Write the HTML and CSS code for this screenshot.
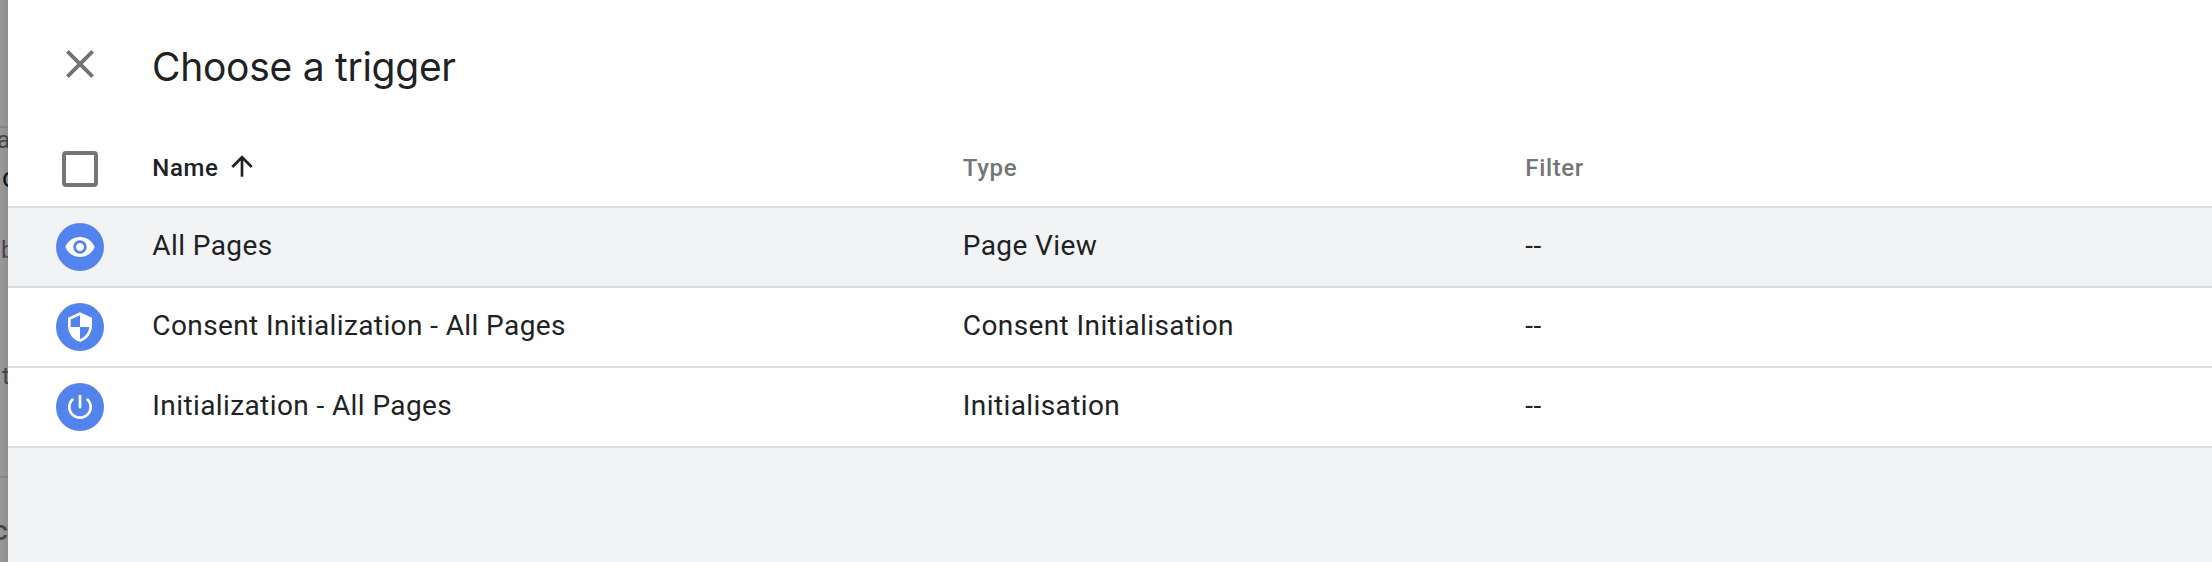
FILE: index.html
```html
<!DOCTYPE html>
<html lang="en">
<head>
<meta charset="utf-8">
<title>Choose a trigger</title>
<link rel="stylesheet" href="styles.css">
</head>
<body>
<div class="app">
  <div class="underlay" aria-hidden="true">
    <span class="rule rule-top"></span>
    <span class="peek peek-a">a</span>
    <span class="peek peek-co">c</span>
    <span class="peek peek-b">b</span>
    <span class="peek peek-t">t</span>
    <span class="rule rule-bottom"></span>
    <span class="peek peek-c">c</span>
  </div>
  <main class="sheet">
    <header class="sheet-header">
      <svg class="close" viewBox="0 0 24 24"><path d="M19 6.41L17.59 5 12 10.59 6.41 5 5 6.41 10.59 12 5 17.59 6.41 19 12 13.41 17.59 19 19 17.59 13.41 12z"/></svg>
      <h1 class="title">Choose a trigger</h1>
    </header>
    <div class="table">
      <div class="row head">
        <span class="cell-icon"><span class="checkbox"></span></span>
        <span class="sorted">Name <svg class="arrow" viewBox="0 0 24 24"><path d="M4 12l1.41 1.41L11 7.83V20h2V7.83l5.58 5.59L20 12l-8-8-8 8z"/></svg></span>
        <span>Type</span>
        <span>Filter</span>
      </div>
      <div class="row active">
        <span class="cell-icon"><span class="badge"><svg viewBox="0 0 24 24"><path d="M12 4.5C7 4.5 2.73 7.61 1 12c1.73 4.39 6 7.5 11 7.5s9.27-3.11 11-7.5c-1.73-4.39-6-7.5-11-7.5zM12 17c-2.76 0-5-2.24-5-5s2.24-5 5-5 5 2.24 5 5-2.24 5-5 5zm0-8c-1.66 0-3 1.34-3 3s1.34 3 3 3 3-1.34 3-3-1.34-3-3-3z"/></svg></span></span>
        <span>All Pages</span>
        <span>Page View</span>
        <span>--</span>
      </div>
      <div class="row">
        <span class="cell-icon"><span class="badge"><svg viewBox="0 0 24 24"><path d="M12 1L3 5v6c0 5.55 3.84 10.74 9 12 5.16-1.26 9-6.45 9-12V5l-9-4zm0 10.99h7c-.53 4.12-3.28 7.79-7 8.94V12H5V6.3l7-3.11v8.8z"/></svg></span></span>
        <span>Consent Initialization - All Pages</span>
        <span>Consent Initialisation</span>
        <span>--</span>
      </div>
      <div class="row">
        <span class="cell-icon"><span class="badge"><svg viewBox="0 0 24 24"><path d="M13 3h-2v10h2V3zm4.83 2.17l-1.42 1.42C17.99 7.86 19 9.81 19 12c0 3.87-3.13 7-7 7s-7-3.13-7-7c0-2.19 1.01-4.14 2.58-5.42L6.17 5.17C4.23 6.82 3 9.26 3 12c0 4.97 4.03 9 9 9s9-4.03 9-9c0-2.74-1.23-5.18-3.17-6.83z"/></svg></span></span>
        <span>Initialization - All Pages</span>
        <span>Initialisation</span>
        <span>--</span>
      </div>
    </div>
  </main>
</div>
</body>
</html>
```

FILE: styles.css
```css
* { box-sizing: border-box; }
body { margin: 0; font-family: Roboto, sans-serif; color: #202124; }
.app { display: flex; width: 2212px; height: 562px; overflow: hidden; }

.underlay { position: relative; flex: none; width: 8px; overflow: hidden; background: linear-gradient(to right, #999, #8e8e8e); }
.peek { position: absolute; line-height: 30px; font-size: 24px; color: #464646; }
.peek-a { left: -3px; top: 125px; }
.peek-co { left: 2px; top: 163px; font-size: 28px; color: #141414; }
.peek-b { left: 1px; top: 235px; }
.peek-t { left: 2px; top: 361px; }
.peek-c { left: -7px; top: 516px; font-size: 28px; font-weight: 500; }
.rule { position: absolute; left: 0; width: 8px; height: 2px; background: #848484; }
.rule-top { top: 126px; }
.rule-bottom { top: 476px; }

.sheet { flex: 1; background: #f1f3f4; }
.sheet-header { display: flex; height: 128px; padding-left: 48px; background: #fff; }
.close { width: 48px; height: 48px; margin-top: 40px; fill: #757575; }
.title { margin: 39px 0 0 48px; font: 400 39px/56px Inter, sans-serif; letter-spacing: -0.28px; }

.row { display: grid; grid-template-columns: 144.3px 810.5px 562.5px 1fr; align-items: center; height: 80px; padding-bottom: 2px; border-bottom: 2px solid #dadce0; background: #fff; font-size: 28px; line-height: 36px; letter-spacing: 0.4px; }
.active { background: #f1f3f4; }
.head { padding: 2px 0 0; font-size: 24px; font-weight: 500; letter-spacing: 0.65px; color: #757575; }
.sorted { display: flex; align-items: center; gap: 7px; color: #202124; }
.arrow { width: 32px; height: 32px; margin-bottom: 4px; fill: #202124; }
.cell-icon { display: flex; justify-content: center; width: 48px; margin: 2px 0 0 48px; }
.checkbox { width: 36px; height: 36px; border: 4px solid #757575; border-radius: 4px; }
.badge { display: flex; align-items: center; justify-content: center; width: 48px; height: 48px; border-radius: 50%; background: #5383ec; }
.badge svg { width: 32px; height: 32px; fill: #fff; }
```
